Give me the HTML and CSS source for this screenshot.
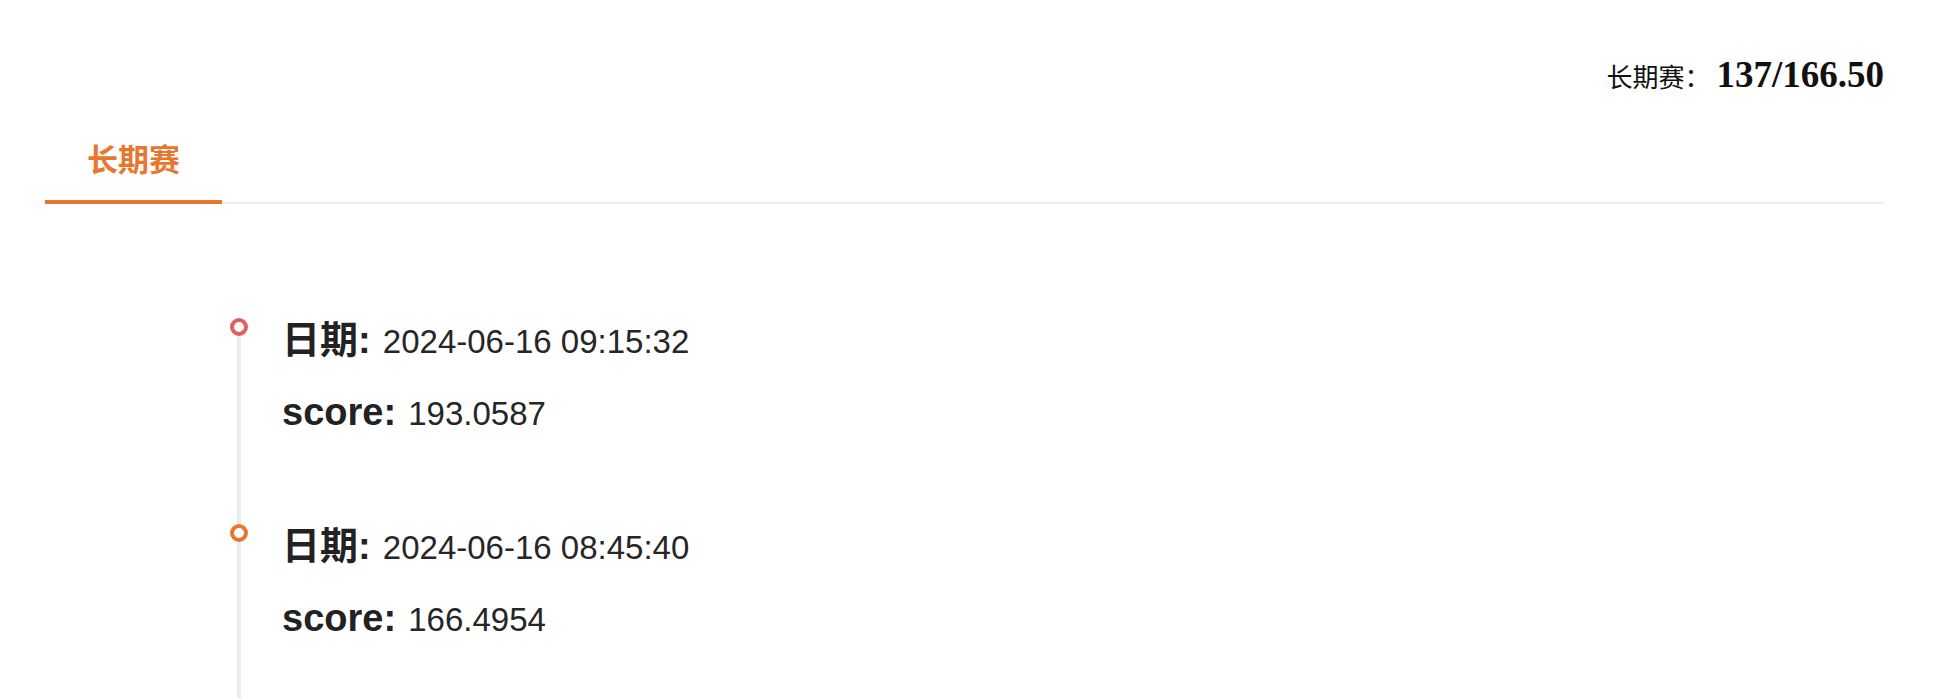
FILE: index.html
```html
<!DOCTYPE html>
<html lang="zh-CN">
<head>
  <meta charset="UTF-8">
  <meta name="viewport" content="width=device-width, initial-scale=1.0">
  <title>长期赛</title>
  <link rel="stylesheet" href="styles.css">
</head>
<body>

  <div class="page">
    <!-- summary -->
    <div class="summary">
      <span class="summary-label">长期赛：</span>
      <span class="summary-value">137/166.50</span>
    </div>

    <!-- tabs -->
    <div class="tabs">
      <div class="tab active">长期赛</div>
    </div>

    <!-- records -->
    <div class="timeline">
      <div class="item">
        <div class="node-col">
          <span class="node red"></span>
          <span class="tail"></span>
        </div>
        <div class="content">
          <p class="row date"><b>日期:</b> 2024-06-16 09:15:32</p>
          <p class="row score"><b>score:</b> 193.0587</p>
        </div>
      </div>
      <div class="item">
        <div class="node-col">
          <span class="node orange"></span>
          <span class="tail"></span>
        </div>
        <div class="content">
          <p class="row date"><b>日期:</b> 2024-06-16 08:45:40</p>
          <p class="row score"><b>score:</b> 166.4954</p>
        </div>
      </div>
    </div>
  </div>

</body>
</html>
```

FILE: styles.css
```css
  body, html {
    margin: 0;
    padding: 0;
    background-color: #fff;
    color: #222;
    font-family: "Liberation Sans", Arial, "Noto Sans CJK SC", sans-serif;
    overflow: hidden;
  }
  .page {
    padding: 0 54px 0 45px;
  }
  .summary {
    display: flex;
    justify-content: flex-end;
    align-items: baseline;
    padding-top: 55px;
    line-height: 40px;
    color: #111;
    font-family: "Liberation Serif", "Times New Roman", "Noto Sans CJK SC", serif;
  }
  .summary-label {
    font-size: 26px;
    margin-right: 6px;
  }
  .summary-value {
    font-size: 37px;
    font-weight: bold;
  }
  .tabs {
    display: flex;
    margin-top: 39px;
    border-bottom: 2px solid #eeeeee;
  }
  .tab {
    padding: 0 42px 22px;
    margin-bottom: -2px;
    font-size: 31px;
    line-height: 40px;
    font-weight: bold;
    font-family: "Noto Sans CJK SC", sans-serif;
  }
  .tab.active {
    color: #e8772e;
    border-bottom: 4px solid #e8772e;
  }
  .timeline {
    margin-top: 114px;
    padding-left: 185px;
  }
  .item {
    display: grid;
    grid-template-columns: 18px 1fr;
    column-gap: 34px;
  }
  .node-col {
    display: flex;
    flex-direction: column;
    align-items: center;
  }
  .node {
    box-sizing: border-box;
    width: 18px;
    height: 18px;
    border-radius: 50%;
    border: 4px solid #e8772e;
    background: #fff;
    flex-shrink: 0;
  }
  .node.red {
    border-color: #e2605c;
  }
  .tail {
    flex: 1;
    width: 4px;
    background: #ececec;
  }
  .content {
    padding: 2px 0 90px;
  }
  .row {
    margin: 0;
    font-size: 33px;
    line-height: 40px;
    color: #262626;
  }
  .row b {
    font-size: 38px;
    margin-right: 3px;
    color: #222;
  }
  .row.score {
    margin-top: 30px;
  }
```
